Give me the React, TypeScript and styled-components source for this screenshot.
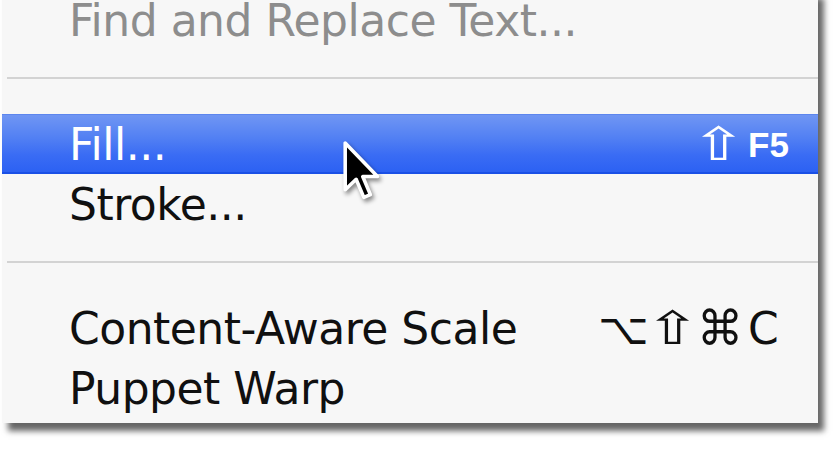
import React from "react";
import styled, { createGlobalStyle } from "styled-components";

const Global = createGlobalStyle`
  html, body { margin: 0; padding: 0; background: #ffffff; }
  body { overflow: hidden; width: 840px; height: 449px; }
`;

const Stage = styled.div`
  position: relative;
  width: 840px;
  height: 449px;
  overflow: hidden;
  background: #ffffff;
`;

const Menu = styled.div`
  margin-top: -10px;
  margin-left: 2px;
  width: 816px;
  padding-bottom: 5px;
  background: #f7f7f7;
  box-shadow: 6px 8px 6px rgba(0, 0, 0, 0.6);
  font-family: "DejaVu Sans", "Liberation Sans", sans-serif;
  font-size: 44px;
  letter-spacing: -0.5px;
`;

const Row = styled.div<{ $active?: boolean; $disabled?: boolean }>`
  display: flex;
  align-items: flex-start;
  box-sizing: border-box;
  height: 60px;
  line-height: 54px;
  padding: 3px 26px 0 67px;
  white-space: nowrap;
  color: ${(p) => (p.$active ? "#ffffff" : p.$disabled ? "#8d8d8d" : "#101010")};
  background: ${(p) =>
    p.$active
      ? "linear-gradient(180deg, #7096f3 0%, #5280f3 40%, #3a6cf4 70%, #2c61f3 100%)"
      : "transparent"};
  border-top: 1px solid ${(p) => (p.$active ? "#5d86ee" : "transparent")};
  border-bottom: 2px solid ${(p) => (p.$active ? "#1a50e6" : "transparent")};
`;

const Label = styled.span`
  flex: 1;
`;

const Shortcut = styled.span`
  display: flex;
  align-items: flex-start;
`;

const Mods = styled.span`
  display: flex;
  gap: 10px;
  letter-spacing: 0;
`;

const Glyph = styled.span<{ $w: number }>`
  display: inline-flex;
  justify-content: center;
  width: ${(p) => p.$w}px;
`;

const GlyphInner = styled.span<{ $sx?: number; $sy?: number }>`
  display: inline-block;
  transform: scale(${(p) => p.$sx ?? 1}, ${(p) => p.$sy ?? 1});
  transform-origin: 50% 62%;
`;

const Key = styled.span<{ $small?: boolean }>`
  width: 44px;
  margin-left: 10px;
  letter-spacing: 0;
  ${(p) =>
    p.$small
      ? `font-family: "Liberation Sans", "DejaVu Sans", sans-serif;
         font-weight: 700;
         font-size: 35px;`
      : ""}
`;

const Separator = styled.div`
  height: 2px;
  margin: 27px 0 35px 5px;
  background: #d3d3d3;
`;

const Cursor = styled.svg`
  position: absolute;
  left: 340px;
  top: 139px;
  width: 46px;
  height: 63px;
  filter: drop-shadow(2px 3px 2px rgba(0, 0, 0, 0.45));
`;

const Shift = () => (
  <Glyph $w={40}>
    <GlyphInner $sx={1.5} $sy={1.05}>⇧</GlyphInner>
  </Glyph>
);

export default function App() {
  return (
    <Stage>
      <Global />
      <Menu>
        <Row $disabled>
          <Label>Find and Replace Text...</Label>
        </Row>
        <Separator />
        <Row $active>
          <Label>Fill...</Label>
          <Shortcut>
            <Mods>
              <Shift />
            </Mods>
            <Key $small>F5</Key>
          </Shortcut>
        </Row>
        <Row>
          <Label>Stroke...</Label>
        </Row>
        <Separator />
        <Row>
          <Label>Content-Aware Scale</Label>
          <Shortcut>
            <Mods>
              <Glyph $w={37}>⌥</Glyph>
              <Shift />
              <Glyph $w={36}>
                <GlyphInner $sx={1.05} $sy={1.1}>⌘</GlyphInner>
              </Glyph>
            </Mods>
            <Key>C</Key>
          </Shortcut>
        </Row>
        <Row>
          <Label>Puppet Warp</Label>
        </Row>
      </Menu>
      <Cursor viewBox="-1.5 -1.5 16 23">
        <path
          d="M0 0 L0 17 L4 13.2 L6.8 19.8 L9.2 18.8 L6.4 12.2 L11.8 12.2 Z"
          fill="#000000"
          stroke="#ffffff"
          strokeWidth="1.3"
          strokeLinejoin="round"
        />
      </Cursor>
    </Stage>
  );
}
